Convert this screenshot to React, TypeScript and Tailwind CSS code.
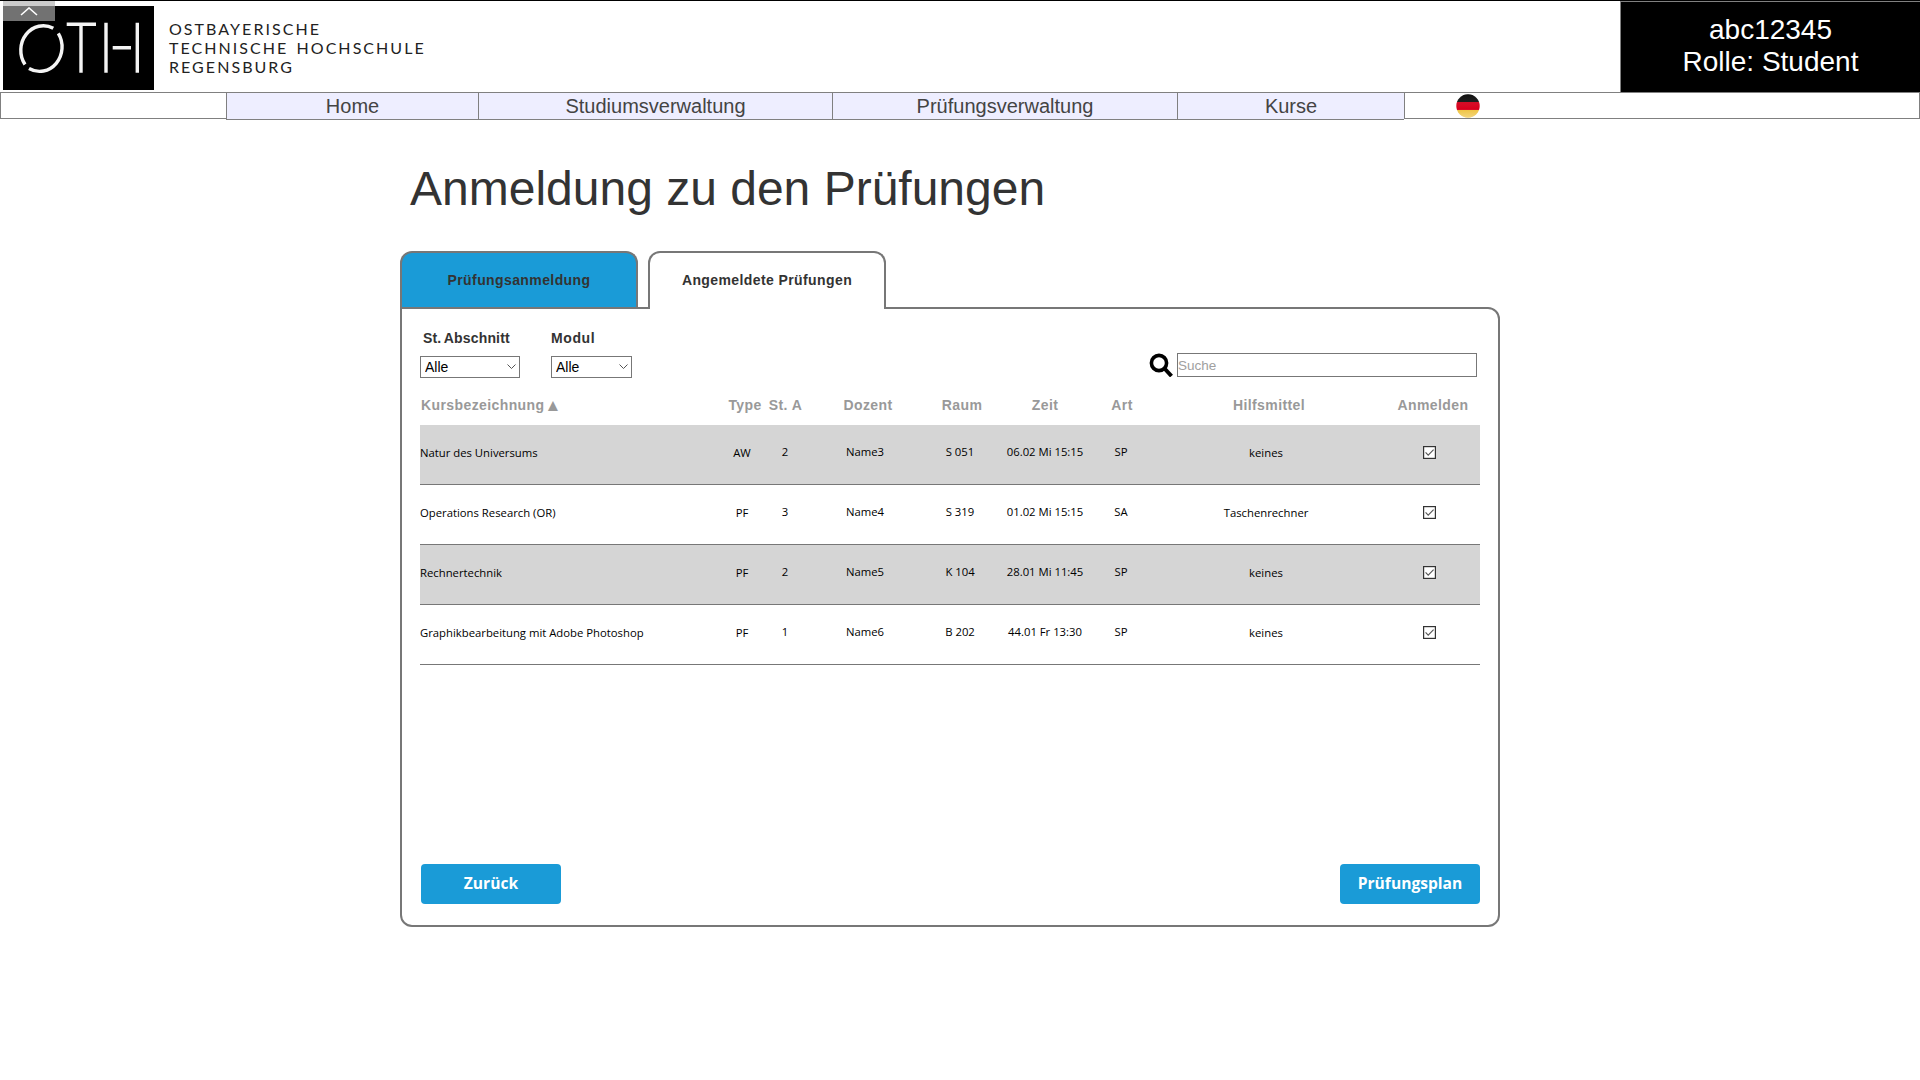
import React from "react";

const rows = [
  { n: "Natur des Universums", t: "AW", s: "2", d: "Name3", r: "S 051", z: "06.02 Mi 15:15", a: "SP", h: "keines", g: true },
  { n: "Operations Research (OR)", t: "PF", s: "3", d: "Name4", r: "S 319", z: "01.02 Mi 15:15", a: "SA", h: "Taschenrechner", g: false },
  { n: "Rechnertechnik", t: "PF", s: "2", d: "Name5", r: "K 104", z: "28.01 Mi 11:45", a: "SP", h: "keines", g: true },
  { n: "Graphikbearbeitung mit Adobe Photoshop", t: "PF", s: "1", d: "Name6", r: "B 202", z: "44.01 Fr 13:30", a: "SP", h: "keines", g: false },
];

const grid = "grid grid-cols-[302px_40px_46px_112px_80px_90px_62px_228px_100px]";

function Logo() {
  return (
    <svg width="151" height="84" viewBox="0 0 151 84" className="block bg-black">
      <g stroke="#f4f4f4" fill="none" strokeWidth="3.4">
        <path d="M50.3 22.3 A 22.5 24.5 0 0 0 22 58.5" />
        <path d="M26 62.5 A 22.5 24.5 0 0 0 55.3 27.3" />
        <path d="M63.7 18.3 H93 M78 18.3 V66.7" />
        <path d="M103 16.7 V66.7 M134.3 16.7 V66.7 M109.7 41.7 H128" />
      </g>
    </svg>
  );
}

function Flag() {
  return (
    <svg width="24" height="24" viewBox="0 0 24 24" className="block">
      <defs>
        <clipPath id="c"><circle cx="12" cy="12" r="11.7" /></clipPath>
        <linearGradient id="s" x1="0" y1="0" x2="0" y2="1">
          <stop offset="0" stopColor="#000" stopOpacity="0.2" />
          <stop offset="0.6" stopColor="#fff" stopOpacity="0" />
          <stop offset="1" stopColor="#fff" stopOpacity="0.35" />
        </linearGradient>
      </defs>
      <g clipPath="url(#c)">
        <rect width="24" height="8" fill="#111" />
        <rect y="8" width="24" height="8" fill="#d8001c" />
        <rect y="16" width="24" height="8" fill="#eec13a" />
        <rect width="24" height="24" fill="url(#s)" />
      </g>
    </svg>
  );
}

function Check() {
  return (
    <svg width="13" height="13" viewBox="0 0 13 13" className="block">
      <rect x="0.6" y="0.6" width="11.8" height="11.8" fill="#fff" stroke="#333" strokeWidth="1.2" />
      <path d="M2.6 6.4 L5.2 9.2 L10.6 3.6" fill="none" stroke="#555" strokeWidth="1.1" />
    </svg>
  );
}

function Search() {
  return (
    <svg width="24" height="24" viewBox="0 0 24 24" className="block">
      <circle cx="10" cy="10" r="7.6" fill="none" stroke="#000" strokeWidth="3.6" />
      <path d="M15.5 15.5 L22.5 23" stroke="#000" strokeWidth="4" />
    </svg>
  );
}

function Select({ w }: { w: string }) {
  return (
    <div className={`relative mt-[8px] h-[22px] ${w}`}>
      <select className="h-full w-full appearance-none rounded-none border border-[#777777] bg-white pl-[4px] text-[14px] text-black">
        <option>Alle</option>
      </select>
      <svg width="9" height="5" viewBox="0 0 9 5" className="pointer-events-none absolute right-[4px] top-[9px]">
        <path d="M0.5 0.5 L4.5 4.5 L8.5 0.5" fill="none" stroke="#555" strokeWidth="1" />
      </svg>
    </div>
  );
}

const navItems = [
  ["Home", "w-[252px]"],
  ["Studiumsverwaltung", "w-[354px]"],
  ["Prüfungsverwaltung", "w-[345px]"],
  ["Kurse", "w-[227px]"],
];

export default function App() {
  return (
    <div className="min-h-screen bg-white font-['Liberation_Sans',Arial,sans-serif]">
      <header className="relative flex h-[92px] border-t border-black">
        <div className="absolute left-[3px] top-0 flex h-[20px] w-[52px] items-start justify-center bg-[#afafaf]/65">
          <svg width="18" height="9" viewBox="0 0 18 9" className="mt-[6px]">
            <path d="M1 8 L9 1 L17 8" fill="none" stroke="#fff" strokeWidth="1.6" />
          </svg>
        </div>
        <div className="ml-[3px] mt-[5px]"><Logo /></div>
        <div className="ml-[15px] mt-[18px] font-['Lato',sans-serif] text-[16px] leading-[19px] tracking-[2.05px] text-[#222222] [word-spacing:2px]">
          <div>OSTBAYERISCHE</div>
          <div>TECHNISCHE HOCHSCHULE</div>
          <div>REGENSBURG</div>
        </div>
        <div className="ml-auto flex w-[300px] flex-col items-center border-l border-t border-[#808080] bg-black pt-[12px] text-[28px] leading-[32px] text-white">
          <div>abc12345</div>
          <div>Rolle: Student</div>
        </div>
      </header>

      <nav className="flex h-[27px] items-start border-y border-l border-r border-[#808080]">
        <div className="w-[225px]" />
        {navItems.map(([label, w]) => (
          <div key={label} className={`${w} -mb-px flex h-[27px] items-center justify-center border-b border-l border-[#808080] bg-[#eeeeff] text-[20px] text-[#444444]`}>
            {label}
          </div>
        ))}
        <div className="flex h-[25px] flex-1 items-start border-l border-[#808080] pl-[51px] pt-[1px]">
          <Flag />
        </div>
      </nav>

      <main className="ml-[400px] w-[1100px]">
        <h1 className="ml-[10px] mt-[42px] text-[48px] font-normal leading-[56px] text-[#333333]">Anmeldung zu den Prüfungen</h1>

        <div className="mt-[34px] flex h-[56px] items-start gap-[10px]">
          <div className="flex h-[56px] w-[238px] items-center justify-center rounded-t-[12px] border-2 border-b-0 border-[#777777] bg-[#1a9bd7] pt-[1px] text-[14px] font-bold tracking-[0.4px] text-[#333333]">
            Prüfungsanmeldung
          </div>
          <div className="relative z-10 flex h-[58px] w-[238px] items-center justify-center rounded-t-[12px] border-2 border-b-0 border-[#777777] bg-white pb-[1px] text-[14px] font-bold tracking-[0.4px] text-[#333333]">
            Angemeldete Prüfungen
          </div>
        </div>

        <section className="flex h-[620px] flex-col rounded-b-[12px] rounded-tr-[12px] border-2 border-[#777777] px-[18px] pt-[20px]">
          <div className="flex items-start">
            <div className="w-[131px]">
              <div className="pl-[3px] text-[14px] font-bold leading-[18px] tracking-[0.15px] text-[#333333] [word-spacing:-1px]">St. Abschnitt</div>
              <Select w="w-[100px]" />
            </div>
            <div>
              <div className="text-[14px] font-bold leading-[18px] tracking-[0.6px] text-[#333333]">Modul</div>
              <Select w="w-[81px]" />
            </div>
            <div className="ml-auto mr-[3px] mt-[24px] flex items-center gap-[4px]">
              <Search />
              <input
                placeholder="Suche"
                className="h-[24px] w-[300px] border border-[#777777] px-0 text-[13.5px] placeholder:text-[#a0a0a0]"
              />
            </div>
          </div>

          <div className={`${grid} mt-[12px] h-[36px] items-center pb-[3px] text-[14px] font-bold tracking-[0.4px] text-[#999999]`}>
            <div className="flex items-center pl-[1px]">Kursbezeichnung<span className="text-[17px] leading-none">▲</span></div>
            <div className="pl-[6px] text-center">Type</div>
            <div className="pl-[1px] text-center">St. A</div>
            <div className="pl-[8px] text-center">Dozent</div>
            <div className="pl-[4px] text-center">Raum</div>
            <div className="text-center">Zeit</div>
            <div className="pl-[2px] text-center">Art</div>
            <div className="pl-[6px] text-center">Hilfsmittel</div>
            <div className="pl-[6px] text-center">Anmelden</div>
          </div>

          <div className="font-['Open_Sans',sans-serif] text-[11.3px] text-black">
            {rows.map((r) => (
              <div key={r.n} className={`${grid} h-[60px] items-center border-b border-[#777777] pb-[3px] ${r.g ? "bg-[#d5d5d5]" : ""}`}>
                <div>{r.n}</div>
                <div className="text-center">{r.t}</div>
                <div className="-mt-[1px] text-center">{r.s}</div>
                <div className="-mt-[2px] pl-[2px] text-center">{r.d}</div>
                <div className="-mt-[2px] text-center">{r.r}</div>
                <div className="-mt-[2px] text-center">{r.z}</div>
                <div className="-mt-[2px] text-center">{r.a}</div>
                <div className="text-center">{r.h}</div>
                <div className="-mt-[2px] flex justify-center pr-[1px]"><Check /></div>
              </div>
            ))}
          </div>

          <div className="mb-[21px] mt-auto flex justify-between pl-[1px] font-['Open_Sans',sans-serif] text-[15.6px] font-bold text-white">
            <button className="flex h-[40px] w-[140px] items-center justify-center rounded-[4px] bg-[#1a9bd7]">Zurück</button>
            <button className="flex h-[40px] w-[140px] items-center justify-center rounded-[4px] bg-[#1a9bd7]">Prüfungsplan</button>
          </div>
        </section>
      </main>
    </div>
  );
}
